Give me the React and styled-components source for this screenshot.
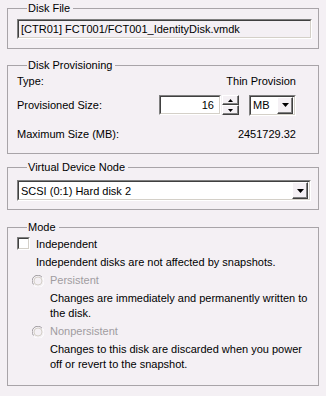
import React from "react";
import styled, { createGlobalStyle } from "styled-components";

const GlobalStyle = createGlobalStyle`
  html, body {
    margin: 0;
    padding: 0;
    background: #f4f0f4;
  }
  body {
    font-family: "Liberation Sans", Arial, sans-serif;
    font-size: 11px;
    color: #000;
  }
`;

const Page = styled.div`
  width: 326px;
  height: 396px;
  box-sizing: border-box;
  padding: 2px 7px 0 7px;
  display: flex;
  flex-direction: column;
  background: #f4f0f4;
`;

const Group = styled.fieldset`
  margin: 0 0 ${(p) => p.after || 0}px 0;
  padding: ${(p) => p.pad || "4px 7px 10px 9px"};
  border: 1px solid #a8a4a8;
  min-width: 0;
  display: flex;
  flex-direction: column;
`;

const Legend = styled.legend`
  padding: 0 3px 0 1px;
  margin-left: 10px;
  line-height: 13px;
  height: 13px;
`;

const Sunken = styled.div`
  box-sizing: border-box;
  height: ${(p) => p.h || 20}px;
  width: ${(p) => (p.w ? p.w + "px" : "auto")};
  margin-left: ${(p) => p.ml || 0}px;
  border-top: 1px solid #808080;
  border-left: 1px solid #808080;
  border-right: 1px solid #ffffff;
  border-bottom: 1px solid #ffffff;
  display: flex;
`;

const SunkenInner = styled.div`
  flex: 1;
  display: flex;
  align-items: center;
  justify-content: ${(p) => (p.right ? "flex-end" : "flex-start")};
  padding: ${(p) => (p.right ? "0 5px 0 2px" : p.combo ? "0 1px 0 2px" : "0 2px")};
  border-top: 1px solid #404040;
  border-left: 1px solid #404040;
  border-right: 1px solid #d4d0c8;
  border-bottom: 1px solid #d4d0c8;
  background: ${(p) => (p.plain ? "#f4f0f4" : "#fff")};
  white-space: nowrap;
  overflow: hidden;
`;

const RaisedBtn = styled.div`
  box-sizing: border-box;
  width: ${(p) => p.w || 16}px;
  height: ${(p) => p.h || 16}px;
  background: #f4f0f4;
  border-top: 1px solid #ffffff;
  border-left: 1px solid #ffffff;
  border-right: 1px solid #404040;
  border-bottom: 1px solid #404040;
  box-shadow: inset -1px -1px 0 #808080;
  display: flex;
  align-items: center;
  justify-content: center;
  align-self: center;
`;

const Row = styled.div`
  display: flex;
  align-items: center;
  height: ${(p) => p.h || 14}px;
  margin-top: ${(p) => p.top || 0}px;
  padding-left: ${(p) => p.indent || 0}px;
`;

const Label = styled.span`
  flex: 1;
  white-space: nowrap;
`;

const Value = styled.span`
  white-space: nowrap;
`;

const Spin = styled.div`
  display: flex;
  flex-direction: column;
  width: 17px;
  height: 20px;
  margin-left: 1px;
`;

const SpinBtn = styled(RaisedBtn)`
  width: 17px;
  height: 10px;
`;

const Text = styled.div`
  color: ${(p) => (p.disabled ? "#a09ca0" : "#000")};
  line-height: 15px;
  padding-left: ${(p) => p.indent || 0}px;
  margin-top: ${(p) => p.top || 0}px;
`;

const Check = styled.div`
  box-sizing: border-box;
  width: 13px;
  height: 13px;
  border-top: 1px solid #808080;
  border-left: 1px solid #808080;
  border-right: 1px solid #fff;
  border-bottom: 1px solid #fff;
  margin-right: 6px;
  &::after {
    content: "";
    display: block;
    width: 9px;
    height: 9px;
    border-top: 1px solid #404040;
    border-left: 1px solid #404040;
    border-right: 1px solid #d4d0c8;
    border-bottom: 1px solid #d4d0c8;
    background: #fff;
  }
`;

const Down = () => (
  <svg width="7" height="4" viewBox="0 0 7 4">
    <path d="M0 0h7L3.5 4z" fill="#000" />
  </svg>
);

const TinyArrow = ({ up }) => (
  <svg width="5" height="3" viewBox="0 0 5 3">
    <path d={up ? "M2.5 0L5 3H0z" : "M0 0h5L2.5 3z"} fill="#000" />
  </svg>
);

const Radio = () => (
  <svg width="12" height="12" viewBox="0 0 12 12" style={{ marginRight: 6 }}>
    <path d="M10 2.2A5.5 5.5 0 0 0 1.5 9.5" stroke="#a09ca0" fill="none" />
    <path d="M10.5 2.5A5.5 5.5 0 0 1 2 10.5" stroke="#ffffff" fill="none" />
    <circle cx="6" cy="6" r="4" fill="#f4f0f4" stroke="#d4d0c8" />
  </svg>
);

export default function App() {
  return (
    <>
      <GlobalStyle />
      <Page>
        <Group after={10} pad="4px 6px 9px 9px">
          <Legend>Disk File</Legend>
          <Sunken h={20}>
            <SunkenInner plain>[CTR01] FCT001/FCT001_IdentityDisk.vmdk</SunkenInner>
          </Sunken>
        </Group>

        <Group after={7} pad="2px 22px 12px 9px">
          <Legend>Disk Provisioning</Legend>
          <Row h={14}>
            <Label>Type:</Label>
            <Value>Thin Provision</Value>
          </Row>
          <Row h={22} top={6}>
            <Label>Provisioned Size:</Label>
            <Sunken w={62} h={20}>
              <SunkenInner right>16</SunkenInner>
            </Sunken>
            <Spin>
              <SpinBtn>
                <TinyArrow up />
              </SpinBtn>
              <SpinBtn>
                <TinyArrow />
              </SpinBtn>
            </Spin>
            <Sunken w={47} h={21} ml={10}>
              <SunkenInner combo>
                <Label>MB</Label>
                <RaisedBtn w={16} h={17}>
                  <Down />
                </RaisedBtn>
              </SunkenInner>
            </Sunken>
          </Row>
          <Row h={14} top={11}>
            <Label>Maximum Size (MB):</Label>
            <Value>2451729.32</Value>
          </Row>
        </Group>

        <Group after={11} pad="6px 7px 8px 9px">
          <Legend>Virtual Device Node</Legend>
          <Sunken h={21}>
            <SunkenInner combo>
              <Label>SCSI (0:1) Hard disk 2</Label>
              <RaisedBtn w={16} h={17}>
                <Down />
              </RaisedBtn>
            </SunkenInner>
          </Sunken>
        </Group>

        <Group pad="2px 7px 14px 9px" style={{ height: 165, boxSizing: "border-box" }}>
          <Legend>Mode</Legend>
          <Row h={15}>
            <Check />
            <span>Independent</span>
          </Row>
          <Text indent={19} top={4}>
            Independent disks are not affected by snapshots.
          </Text>
          <Row h={15} top={3} indent={15}>
            <Radio />
            <Text disabled>Persistent</Text>
          </Row>
          <Text indent={33} top={3}>
            Changes are immediately and permanently written to
            <br />
            the disk.
          </Text>
          <Row h={15} top={3} indent={15}>
            <Radio />
            <Text disabled>Nonpersistent</Text>
          </Row>
          <Text indent={33} top={3}>
            Changes to this disk are discarded when you power
            <br />
            off or revert to the snapshot.
          </Text>
        </Group>
      </Page>
    </>
  );
}
